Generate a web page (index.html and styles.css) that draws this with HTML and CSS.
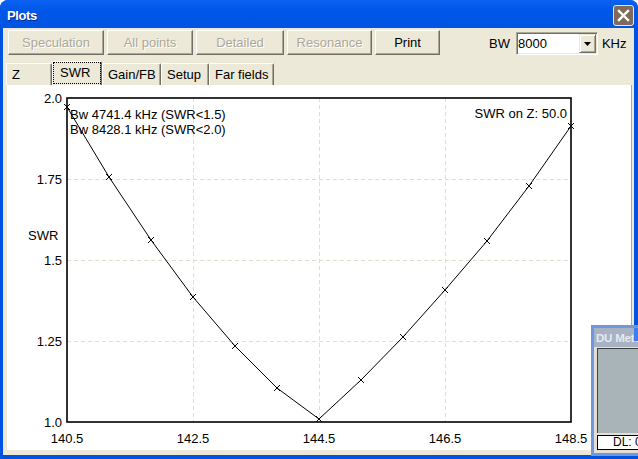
FILE: index.html
```html
<!DOCTYPE html>
<html>
<head>
<meta charset="utf-8">
<title>Plots</title>
<link rel="stylesheet" href="styles.css">
</head>
<body>
<div class="window">
  <div class="titlebar">
    <span class="title">Plots</span>
    <div class="close">
      <svg width="13" height="13" viewBox="0 0 13 13"><path d="M2 2L11 11M11 2L2 11" stroke="#fff" stroke-width="2.4" stroke-linecap="square"/></svg>
    </div>
  </div>
  <div class="client">
    <div class="toolbar">
      <button class="btn w-spec" disabled>Speculation</button>
      <button class="btn w-all" disabled>All points</button>
      <button class="btn w-det" disabled>Detailed</button>
      <button class="btn w-res" disabled>Resonance</button>
      <button class="btn w-print">Print</button>
      <div class="bw">
        <span class="lbl">BW</span>
        <div class="combo">
          <span class="combo-val">8000</span>
          <span class="combo-btn"><svg width="7" height="4" viewBox="0 0 7 4"><path d="M0 0H7L3.5 4Z" fill="#000"/></svg></span>
        </div>
        <span class="lbl">KHz</span>
      </div>
    </div>
    <div class="tabs">
      <div class="tab t-z">Z</div>
      <div class="tab active t-swr"><span class="focus">SWR</span></div>
      <div class="tab t-gain">Gain/FB</div>
      <div class="tab t-setup">Setup</div>
      <div class="tab t-far">Far fields</div>
    </div>
    <div class="panel">
      <svg class="chart" width="624" height="365" viewBox="7 85 624 365">
        <path class="grid" d="M193.5 98V422M319.5 98V422M445.5 98V422M67 179.5H571M67 260.5H571M67 341.5H571"/>
        <rect class="frame" x="67" y="98" width="504" height="324"/>
        <polyline class="curve" points="67,107 109,177 151,240 193,297 235,346 277,388 319,419 361,380 403,337 445,290 487,241 529,186 571,126"/>
        <path class="marks" d="M64 104L70 110M70 104L64 110M106 174L112 180M112 174L106 180M148 237L154 243M154 237L148 243M190 294L196 300M196 294L190 300M232 343L238 349M238 343L232 349M274 385L280 391M280 385L274 391M316 416L322 422M322 416L316 422M358 377L364 383M364 377L358 383M400 334L406 340M406 334L400 340M442 287L448 293M448 287L442 293M484 238L490 244M490 238L484 244M526 183L532 189M532 183L526 189M568 123L574 129M574 123L568 129"/>
        <g class="ylab">
          <text x="62" y="103">2.0</text>
          <text x="62" y="184">1.75</text>
          <text x="62" y="265">1.5</text>
          <text x="62" y="346">1.25</text>
          <text x="62" y="427">1.0</text>
        </g>
        <g class="xlab">
          <text x="67" y="443">140.5</text>
          <text x="193" y="443">142.5</text>
          <text x="319" y="443">144.5</text>
          <text x="445" y="443">146.5</text>
          <text x="571" y="443">148.5</text>
        </g>
        <text class="lab" x="28" y="240">SWR</text>
        <text class="lab" x="70" y="119">Bw 4741.4 kHz (SWR&lt;1.5)</text>
        <text class="lab" x="70" y="134">Bw 8428.1 kHz (SWR&lt;2.0)</text>
        <text class="lab end" x="567" y="118">SWR on Z: 50.0</text>
      </svg>
    </div>
  </div>
  <div class="du">
    <div class="du-title"><span>DU Meter</span></div>
    <span class="du-btn"></span>
    <div class="du-body">
      <div class="du-graph"></div>
      <div class="du-dl">DL: 0</div>
    </div>
  </div>
</div>
</body>
</html>
```

FILE: styles.css
```css
html, body {
  margin: 0;
  padding: 0;
  background: #fff;
}
body {
  font-family: "Liberation Sans", Arial, sans-serif;
  font-size: 13px;
  color: #000;
}
.window {
  position: relative;
  width: 638px;
  height: 459px;
  background: #0053e1;
  border-radius: 8px 8px 0 0;
  display: flex;
  flex-direction: column;
  overflow: hidden;
}
.titlebar {
  height: 28px;
  flex: none;
  display: flex;
  align-items: flex-start;
  background: linear-gradient(#0b62f2, #0057e8 35%, #0054e3);
}
.title {
  margin: 9px 0 0 7px;
  font-weight: bold;
  font-size: 13px;
  letter-spacing: -0.4px;
  line-height: 14px;
  color: #fff;
  text-shadow: 1px 1px #0a2c8e;
}
.close {
  margin: 5px 4px 0 auto;
  width: 19px;
  height: 19px;
  border: 1px solid #ece8e0;
  border-radius: 3px;
  background: #7f6b5b;
  display: flex;
  align-items: center;
  justify-content: center;
}
.close svg { display: block; }
.client {
  flex: 1;
  margin: 0 4px 4px 3px;
  background: #ece9d8;
  display: flex;
  flex-direction: column;
}
.toolbar {
  height: 25px;
  padding: 2px 0 0 5px;
  display: flex;
  align-items: flex-start;
  gap: 3px;
  flex: none;
}
.btn {
  height: 25px;
  box-sizing: border-box;
  margin: 0;
  padding: 0;
  font: 13px "Liberation Sans", Arial, sans-serif;
  color: #000;
  background: #ece9d8;
  border: 1px solid;
  border-color: #fff #716f64 #716f64 #fff;
  box-shadow: inset -1px -1px #aca899;
  border-radius: 0;
}
.btn:disabled {
  color: #aca899;
  text-shadow: 1px 1px #fff;
}
.w-spec { width: 96px; }
.w-all { width: 86px; }
.w-det { width: 88px; }
.w-res { width: 85px; }
.w-print { width: 65px; }
.bw {
  display: flex;
  align-items: center;
  margin: 2px 0 0 46px;
  height: 23px;
}
.combo {
  width: 82px;
  height: 23px;
  box-sizing: border-box;
  margin: 0 4px 0 6px;
  background: #fff;
  border: 1px solid;
  border-color: #aca899 #fff #fff #aca899;
  box-shadow: inset 1px 1px #716f64, inset -1px -1px #ece9d8;
  display: flex;
  align-items: center;
}
.combo-val {
  flex: 1;
  padding-left: 1px;
  line-height: 15px;
}
.combo-btn {
  width: 17px;
  height: 19px;
  box-sizing: border-box;
  margin-right: 1px;
  background: #ece9d8;
  border: 1px solid;
  border-color: #ece9d8 #716f64 #716f64 #ece9d8;
  box-shadow: inset 1px 1px #fff, inset -1px -1px #aca899;
  display: flex;
  align-items: center;
  justify-content: center;
}
.combo-btn svg { display: block; }
.tabs {
  height: 24px;
  margin-top: 6px;
  padding-left: 3px;
  display: flex;
  align-items: flex-end;
  flex: none;
}
.tab {
  box-sizing: border-box;
  height: 22px;
  padding: 3px 0 0 5px;
  line-height: 15px;
  white-space: nowrap;
  border-top: 1px solid #fff;
  border-left: 1px solid #fff;
  border-right: 1px solid #716f64;
  box-shadow: inset -1px 0 #aca899;
  border-radius: 2px 2px 0 0;
}
.t-z { width: 46px; }
.t-swr { width: 50px; }
.t-gain { width: 59px; }
.t-setup { width: 48px; }
.t-far { width: 65px; }
.tab.active {
  height: 24px;
  padding: 0;
}
.focus {
  display: block;
  height: 22px;
  box-sizing: border-box;
  border: 1px dotted #000;
  padding: 2px 0 0 6px;
  line-height: 15px;
}
.panel {
  flex: 1;
  margin: 0 2px 5px 4px;
  background: #fff;
  border-right: 1px solid #aca899;
}
.chart {
  display: block;
  font-family: "Liberation Sans", Arial, sans-serif;
  font-size: 13px;
}
.grid {
  fill: none;
  stroke: #e2dece;
  stroke-width: 1;
  stroke-dasharray: 4 3;
}
.frame {
  fill: none;
  stroke: #000;
  stroke-width: 1.6;
}
.curve {
  fill: none;
  stroke: #000;
  stroke-width: 1;
}
.marks {
  fill: none;
  stroke: #000;
  stroke-width: 1;
}
.ylab text { text-anchor: end; }
.xlab text { text-anchor: middle; }
.lab.end { text-anchor: end; }
.du {
  position: absolute;
  left: 591px;
  top: 325px;
  width: 52px;
  height: 131px;
  box-sizing: border-box;
  background: #e2dfd4;
  border: 3px solid #7297de;
  border-right: none;
  display: flex;
  flex-direction: column;
}
.du-title {
  height: 19px;
  flex: none;
  background: #a7b3c3;
  color: #e6eaf0;
  font-weight: bold;
  font-size: 11.5px;
  letter-spacing: -0.2px;
  line-height: 20px;
  padding-left: 2px;
  white-space: nowrap;
  overflow: hidden;
}
.du-btn {
  position: absolute;
  left: 40px;
  top: 0;
  width: 8px;
  height: 13px;
  background: #3d7ff0;
}
.du-body {
  flex: 1;
  padding: 1px 0 0 3px;
  display: flex;
  flex-direction: column;
}
.du-graph {
  height: 85px;
  box-sizing: border-box;
  background: #a9b4b9;
  border-top: 1px solid #404040;
  border-left: 1px solid #404040;
}
.du-dl {
  margin-top: 2px;
  height: 15px;
  box-sizing: border-box;
  border: 1px solid #000;
  background: #fff;
  font-size: 12px;
  line-height: 13px;
  padding-left: 15px;
  white-space: nowrap;
}
```
